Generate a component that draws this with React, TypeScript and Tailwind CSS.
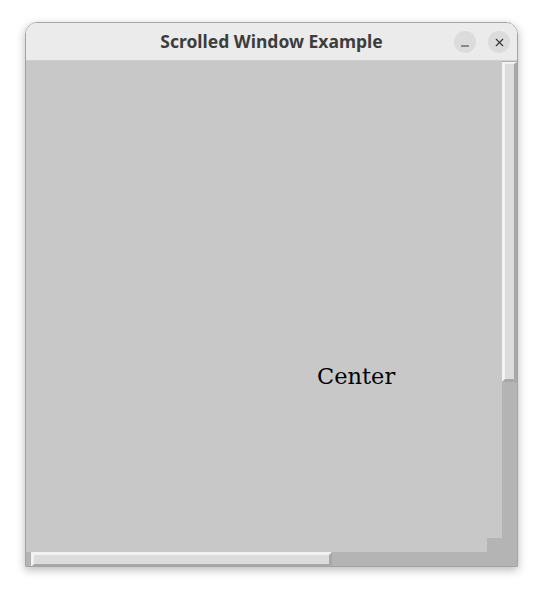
import { X, Minus } from 'lucide-react'

function TitleButton({ children }: { children: React.ReactNode }) {
  return (
    <div className="flex h-[22px] w-[22px] items-center justify-center rounded-full bg-[#dcdcdc] text-[#333333]">
      {children}
    </div>
  )
}

export default function App() {
  return (
    <div className="h-[595px] w-[543px] bg-white pl-[25px] pt-[22px]">
      <div className="flex h-[545px] w-[493px] flex-col overflow-hidden rounded-t-[12px] border border-[#a4a4a4] shadow-[0_3px_10px_rgba(0,0,0,0.28)]">
        {/* header bar */}
        <div className="relative flex h-[38px] shrink-0 items-center justify-center border-b border-[#cfcfcf] bg-[#ebebeb]">
          <span className="text-[17.5px] font-bold text-[#3d3d3d]" style={{ fontFamily: '"Noto Sans", sans-serif' }}>
            Scrolled Window Example
          </span>
          <div className="absolute right-[7px] top-[8px] flex gap-[12px]">
            <TitleButton>
              <Minus size={12} strokeWidth={2} className="mt-[7px]" />
            </TitleButton>
            <TitleButton>
              <X size={13} strokeWidth={2} />
            </TitleButton>
          </div>
        </div>

        {/* body */}
        <div className="flex flex-1 flex-col bg-[#b4b4b4]">
          <div className="flex h-[491px]">
            <div className="flex w-[476px] flex-col">
              <div className="h-[477px] bg-[#c8c8c8] pl-[291px] pt-[304px]">
                <span className="text-[22.5px] leading-none text-black" style={{ fontFamily: '"DejaVu Serif", serif' }}>
                  Center
                </span>
              </div>
              <div className="flex h-[14px]">
                <div className="w-[461px] bg-[#c8c8c8]"></div>
              </div>
            </div>
            <div className="w-[15px] pt-[1px]">
              <div className="h-[320px] border-t-[2px] border-r-[3px] border-b-[3px] border-l-[3px] border-t-[#f2f2f2] border-l-[#f2f2f2] border-r-[#a8a8a8] border-b-[#a8a8a8] bg-[#dcdcdc]"></div>
            </div>
          </div>
          <div className="flex h-[15px] pl-[5px]">
            <div className="w-[301px] border-[3px] border-t-[#f2f2f2] border-l-[#f2f2f2] border-r-[#a8a8a8] border-b-[#a8a8a8] bg-[#dcdcdc]"></div>
          </div>
        </div>
      </div>
    </div>
  )
}
